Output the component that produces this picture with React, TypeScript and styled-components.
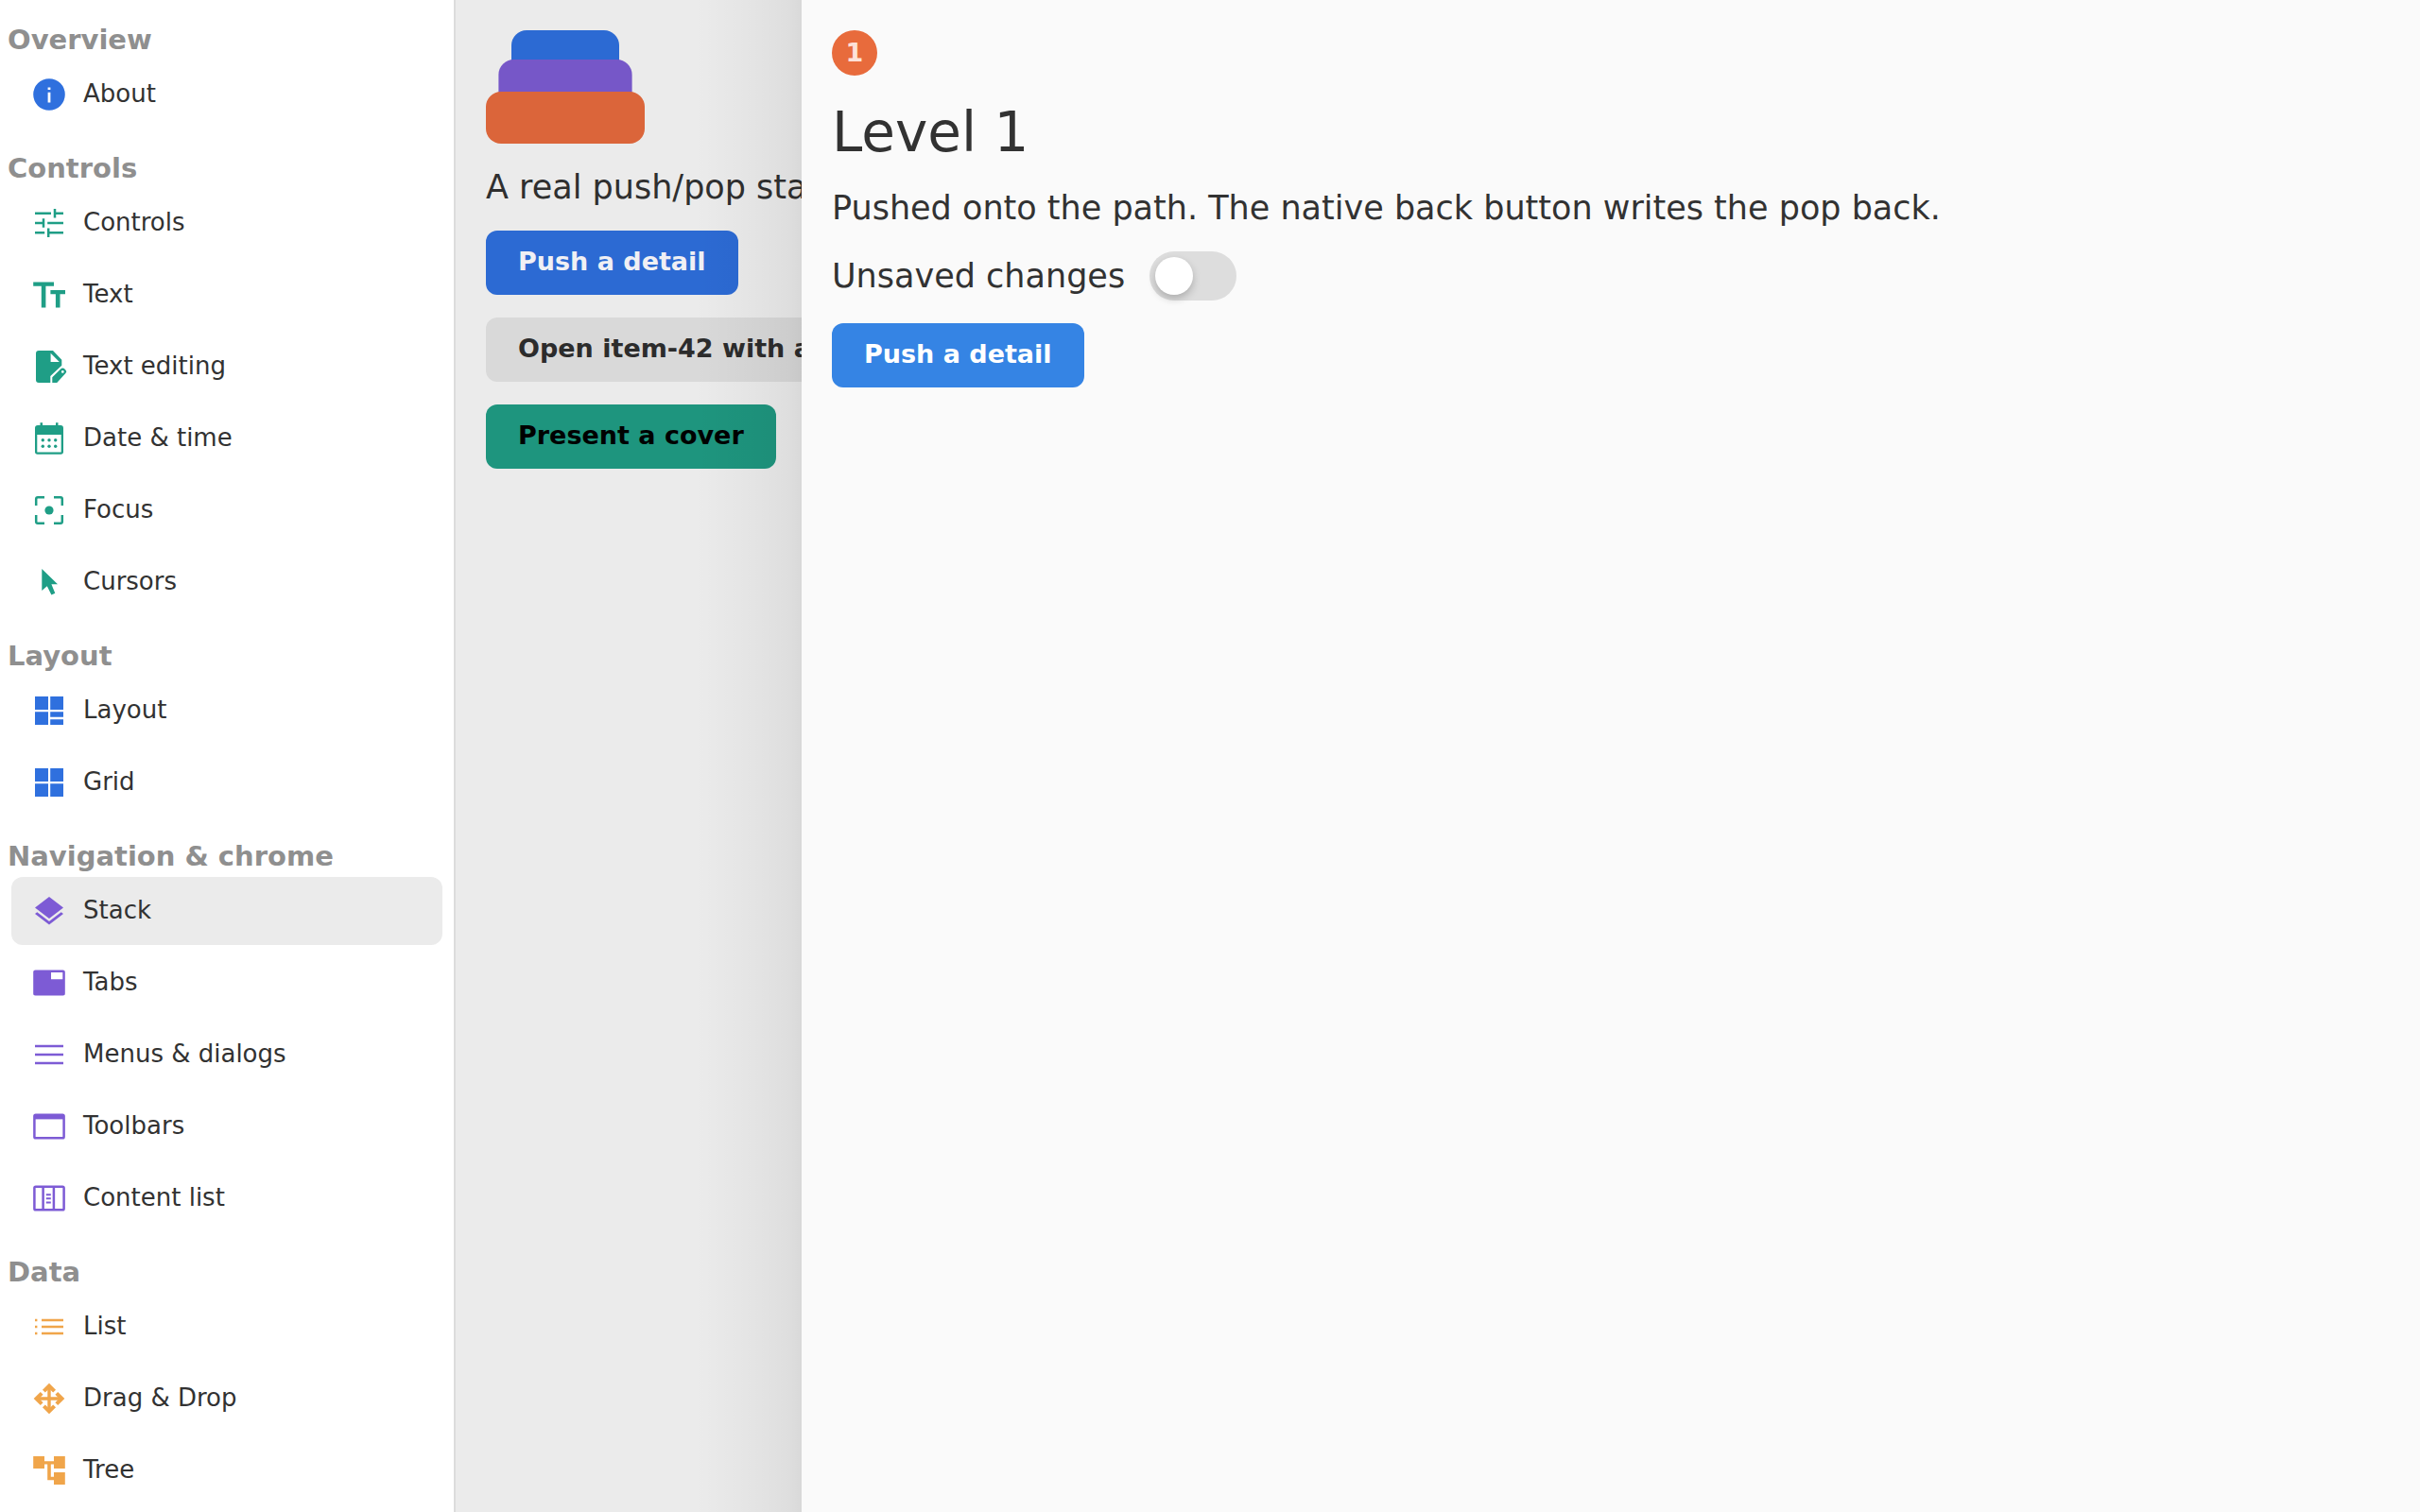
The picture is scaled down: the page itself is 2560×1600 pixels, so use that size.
import React from "react";
import styled, { createGlobalStyle } from "styled-components";

const GlobalStyle = createGlobalStyle`
  *, *::before, *::after { box-sizing: border-box; }
  body {
    margin: 0;
    background: #fafafa;
    color: #323232;
    font-family: "DejaVu Sans", sans-serif;
  }
`;

const palette = {
  blue: "#2f70de",
  green: "#1f9e86",
  purple: "#7d5bd5",
  amber: "#f0a54a",
};

const Shell = styled.div`
  display: flex;
  min-height: 100vh;
`;

const Sidebar = styled.nav`
  flex: 0 0 482px;
  background: #ffffff;
  border-right: 2px solid #dcdcdc;
`;

const SectionTitle = styled.h2`
  margin: 0;
  padding: 25px 8px 5px;
  font-size: 29px;
  line-height: 34px;
  font-weight: 700;
  color: #8f8f8f;
`;

const NavList = styled.ul`
  display: flex;
  flex-direction: column;
  gap: 4px;
  margin: 0;
  padding: 0 12px;
  list-style: none;
`;

const NavLink = styled.a<{ $active?: boolean }>`
  display: flex;
  align-items: center;
  gap: 16px;
  height: 72px;
  padding: 0 20px;
  border-radius: 12px;
  background: ${(p) => (p.$active ? "#ebebeb" : "transparent")};
  color: inherit;
  font-size: 26px;
  line-height: 32px;
  text-decoration: none;
`;

const NavLabel = styled.span`
  padding-bottom: 2px;
`;

const NavIcon = styled.svg<{ $tint: string }>`
  flex: none;
  width: 40px;
  height: 40px;
  color: ${(p) => p.$tint};
`;

const Stage = styled.main`
  flex: 1;
  display: flex;
  min-width: 0;
`;

const Page = styled.section`
  display: flex;
  flex-direction: column;
  align-items: flex-start;
  gap: 24px;
  padding: 32px;
`;

const RootPage = styled(Page)`
  position: relative;
  flex: 0 0 366px;
  overflow: hidden;
  background: #ebebeb;
`;

const EdgeShade = styled.div`
  position: absolute;
  inset: 0 0 0 auto;
  width: 112px;
  pointer-events: none;
  background: linear-gradient(
    to left,
    rgba(0, 0, 0, 0.08),
    rgba(0, 0, 0, 0.055) 14px,
    rgba(0, 0, 0, 0.042) 30px,
    rgba(0, 0, 0, 0.025) 64px,
    rgba(0, 0, 0, 0)
  );
`;

const DetailPage = styled(Page)`
  flex: 1;
  min-width: 0;
  background: #fafafa;
`;

const Body = styled.p`
  margin: 0;
  font-size: 35px;
  line-height: 44px;
`;

const RootBody = styled(Body)`
  white-space: nowrap;
  color: #2f2f2f;
`;

const Title = styled.h1`
  margin: 0;
  padding-top: 2px;
  font-size: 58px;
  line-height: 68px;
  font-weight: 400;
`;

const Badge = styled.span`
  display: grid;
  place-items: center;
  width: 48px;
  height: 48px;
  border-radius: 50%;
  background: #e86b3c;
  color: #fde1d8;
  font-size: 27px;
  line-height: 32px;
  font-weight: 700;
`;

const tones = {
  accent: ["#3584e4", "#ffffff"],
  accentDim: ["#2c6ad3", "#f0f0f4"],
  neutral: ["#d9d9d9", "#2c2c2c"],
  green: ["#1e957e", "#000000"],
};

const Button = styled.button<{ $tone: keyof typeof tones }>`
  flex: none;
  height: 68px;
  padding: 0 34px 2px;
  border: 0;
  border-radius: 12px;
  background: ${(p) => tones[p.$tone][0]};
  color: ${(p) => tones[p.$tone][1]};
  font-family: inherit;
  font-size: 27px;
  line-height: 32px;
  font-weight: 700;
  white-space: nowrap;
`;

const SwitchRow = styled.label`
  display: flex;
  align-items: center;
  gap: 26px;
  height: 52px;
  font-size: 35px;
  line-height: 44px;
`;

const Switch = styled.input`
  appearance: none;
  display: flex;
  align-items: center;
  width: 92px;
  height: 52px;
  margin: 0;
  padding: 6px;
  border-radius: 26px;
  background: #dddddd;

  &::before {
    content: "";
    width: 40px;
    height: 40px;
    border-radius: 50%;
    background: #ffffff;
    box-shadow: 0 4px 8px rgba(0, 0, 0, 0.22);
  }

  &:checked {
    justify-content: flex-end;
    background: #3584e4;
  }
`;

const StackArt = styled.svg`
  display: block;
  flex: none;
  width: 168px;
  height: 120px;
`;

const line = { fill: "none", stroke: "currentColor", strokeWidth: 2.5 };

/* Glyphs are drawn on a 40 unit square. */
const icons = {
  info: (
    <path
      fill="currentColor"
      fillRule="evenodd"
      d="M20 3.2a16.8 16.8 0 1 0 0 33.6 16.8 16.8 0 0 0 0-33.6zM18.6 12.4h2.8v2.7h-2.8zM18.6 17.8h2.8v10.6h-2.8z"
    />
  ),
  tune: (
    <path
      {...line}
      d="M5 9.8h17M26 9.8h9M26 5v9.6M5 20h9M18.2 20H35M14 15.2v9.6M5 30.2h10.2M19.2 30.2H35M19.2 25.4V35"
    />
  ),
  text: <path fill="currentColor" d="M3.2 6.5h21.8v4.3h-8.6v22.7h-4.6V10.8H3.2zM21.4 15H37v4.2h-5.5v14.3h-4.6V19.2h-5.5z" />,
  edit: (
    <>
      <path
        fill="currentColor"
        fillRule="evenodd"
        d="M9 3h15l9.3 9.7v6L21.3 30v7H9a3 3 0 0 1-3-3V6a3 3 0 0 1 3-3zM21.6 5.7V15h9.2z"
      />
      <path
        fill="currentColor"
        fillRule="evenodd"
        d="M23.3 37v-5.7l8.6-8.6a3.4 3.4 0 0 1 4.8 0l.7.7a2.6 2.6 0 0 1 0 3.7L28.2 37zM34.3 24a1.4 1.4 0 1 0 0 2.8 1.4 1.4 0 0 0 0-2.8z"
      />
    </>
  ),
  calendar: (
    <g fill="currentColor">
      <path
        fillRule="evenodd"
        d="M10.5 3.3H13V6h14V3.3h2.5V6H32a3 3 0 0 1 3 3v25a2.7 2.7 0 0 1-2.7 2.7H7.7A2.7 2.7 0 0 1 5 34V9a3 3 0 0 1 3-3h2.5zM7.3 16v18.5h25.4V16z"
      />
      {[21.7, 28.3].map((y) => [13.3, 20, 26.7].map((x) => <circle key={x + y} cx={x} cy={y} r="1.7" />))}
    </g>
  ),
  focus: (
    <>
      <path {...line} d="M6.2 15V8a1.8 1.8 0 0 1 1.8-1.8h7M25 6.2h7A1.8 1.8 0 0 1 33.8 8v7M33.8 25v7a1.8 1.8 0 0 1-1.8 1.8h-7M15 33.8H8A1.8 1.8 0 0 1 6.2 32v-7" />
      <circle cx="20" cy="20" r="4.6" fill="currentColor" />
    </>
  ),
  cursor: <path fill="currentColor" d="M12.3 6L29 22.2H22.4L26.3 31.7L22.4 33.5L17.8 24.2L12.3 29Z" />,
  layout: <path fill="currentColor" d="M5 5h14v14H5zM21.2 5H35v14H21.2zM5 21.2h14V35H5zM21.2 21.2H35v5.6H21.2zM21.2 29.2H35V35H21.2z" />,
  grid: <path fill="currentColor" d="M5 5h14v14H5zM21.2 5H35v14H21.2zM5 21.2h14V35H5zM21.2 21.2H35V35H21.2z" />,
  layers: <path fill="currentColor" d="M20 5L35 16.5L20 28L5 16.5ZM5 22.9L7.3 21.2L20 31L32.7 21.2L35 22.9L20 34.5Z" />,
  tabs: <path fill="currentColor" fillRule="evenodd" d="M5.5 6.5h29A2.3 2.3 0 0 1 36.8 9v22a2.3 2.3 0 0 1-2.3 2.5h-29A2.3 2.3 0 0 1 3.2 31V9a2.3 2.3 0 0 1 2.3-2.5zM22 9v7.3h12.3V9z" />,
  menu: <path {...line} d="M5 11h30M5 20h30M5 29h30" />,
  toolbar: (
    <>
      <rect {...line} x="4.4" y="7.7" width="31.2" height="24.6" rx="1.4" />
      <path fill="currentColor" d="M4 7h32v5.4H4z" />
    </>
  ),
  columns: (
    <>
      <rect {...line} x="4.4" y="7.7" width="31.2" height="24.6" rx="1.4" />
      <path {...line} d="M13.6 8v24M24.9 8v24" />
      <path {...line} strokeWidth="2" d="M16.8 16.2h5M16.8 20.2h5M16.8 24.4h5" />
    </>
  ),
  list: <path {...line} d="M12 12.9h23M12 20h23M12 27.1h23M5 12.9h2.4M5 20h2.4M5 27.1h2.4" />,
  move: (
    <>
      <path {...line} strokeWidth="3.4" d="M20 7v26M7 20h26" />
      <path
        {...line}
        strokeWidth="4"
        d="M14.4 12.2L20 6.5l5.6 5.7M14.4 27.8l5.6 5.7 5.6-5.7M12.2 14.4L6.5 20l5.7 5.6M27.8 14.4l5.7 5.6-5.7 5.6"
      />
    </>
  ),
  tree: (
    <path fill="currentColor" d="M3.2 5H15v5.2h10V5h11.8v13H25v-4.4h-3.2v13.2H25V22h11.8v13H25v-4.8h-6.8V13.6H15V18H3.2z" />
  ),
};

type Item = { label: string; icon: keyof typeof icons };
type Section = { title: string; tint: string; items: Item[] };

const sections: Section[] = [
  { title: "Overview", tint: palette.blue, items: [{ label: "About", icon: "info" }] },
  {
    title: "Controls",
    tint: palette.green,
    items: [
      { label: "Controls", icon: "tune" },
      { label: "Text", icon: "text" },
      { label: "Text editing", icon: "edit" },
      { label: "Date & time", icon: "calendar" },
      { label: "Focus", icon: "focus" },
      { label: "Cursors", icon: "cursor" },
    ],
  },
  {
    title: "Layout",
    tint: palette.blue,
    items: [
      { label: "Layout", icon: "layout" },
      { label: "Grid", icon: "grid" },
    ],
  },
  {
    title: "Navigation & chrome",
    tint: palette.purple,
    items: [
      { label: "Stack", icon: "layers" },
      { label: "Tabs", icon: "tabs" },
      { label: "Menus & dialogs", icon: "menu" },
      { label: "Toolbars", icon: "toolbar" },
      { label: "Content list", icon: "columns" },
    ],
  },
  {
    title: "Data",
    tint: palette.amber,
    items: [
      { label: "List", icon: "list" },
      { label: "Drag & Drop", icon: "move" },
      { label: "Tree", icon: "tree" },
    ],
  },
];

export default function App() {
  return (
    <>
      <GlobalStyle />
      <Shell>
        <Sidebar>
          {sections.map((section) => (
            <section key={section.title}>
              <SectionTitle>{section.title}</SectionTitle>
              <NavList>
                {section.items.map((item) => {
                  const active = item.label === "Stack";
                  return (
                    <li key={item.label}>
                      <NavLink href="#" $active={active} aria-current={active ? "page" : undefined}>
                        <NavIcon viewBox="0 0 40 40" $tint={section.tint} aria-hidden="true">
                          {icons[item.icon]}
                        </NavIcon>
                        <NavLabel>{item.label}</NavLabel>
                      </NavLink>
                    </li>
                  );
                })}
              </NavList>
            </section>
          ))}
        </Sidebar>
        <Stage>
          <RootPage>
            <StackArt viewBox="0 0 168 120" aria-hidden="true">
              <rect x="27" y="0" width="114" height="56" rx="16" fill="#2c6ad3" />
              <rect x="13.4" y="31" width="141.2" height="56" rx="16" fill="#7657c8" />
              <rect x="0" y="65" width="168" height="55" rx="16" fill="#db653a" />
            </StackArt>
            <RootBody>A real push/pop stack</RootBody>
            <Button type="button" $tone="accentDim">Push a detail</Button>
            <Button type="button" $tone="neutral">Open item-42 with a path</Button>
            <Button type="button" $tone="green">Present a cover</Button>
            <EdgeShade />
          </RootPage>
          <DetailPage>
            <Badge>1</Badge>
            <Title>Level 1</Title>
            <Body>Pushed onto the path. The native back button writes the pop back.</Body>
            <SwitchRow>
              Unsaved changes
              <Switch type="checkbox" role="switch" />
            </SwitchRow>
            <Button type="button" $tone="accent">Push a detail</Button>
          </DetailPage>
        </Stage>
      </Shell>
    </>
  );
}
